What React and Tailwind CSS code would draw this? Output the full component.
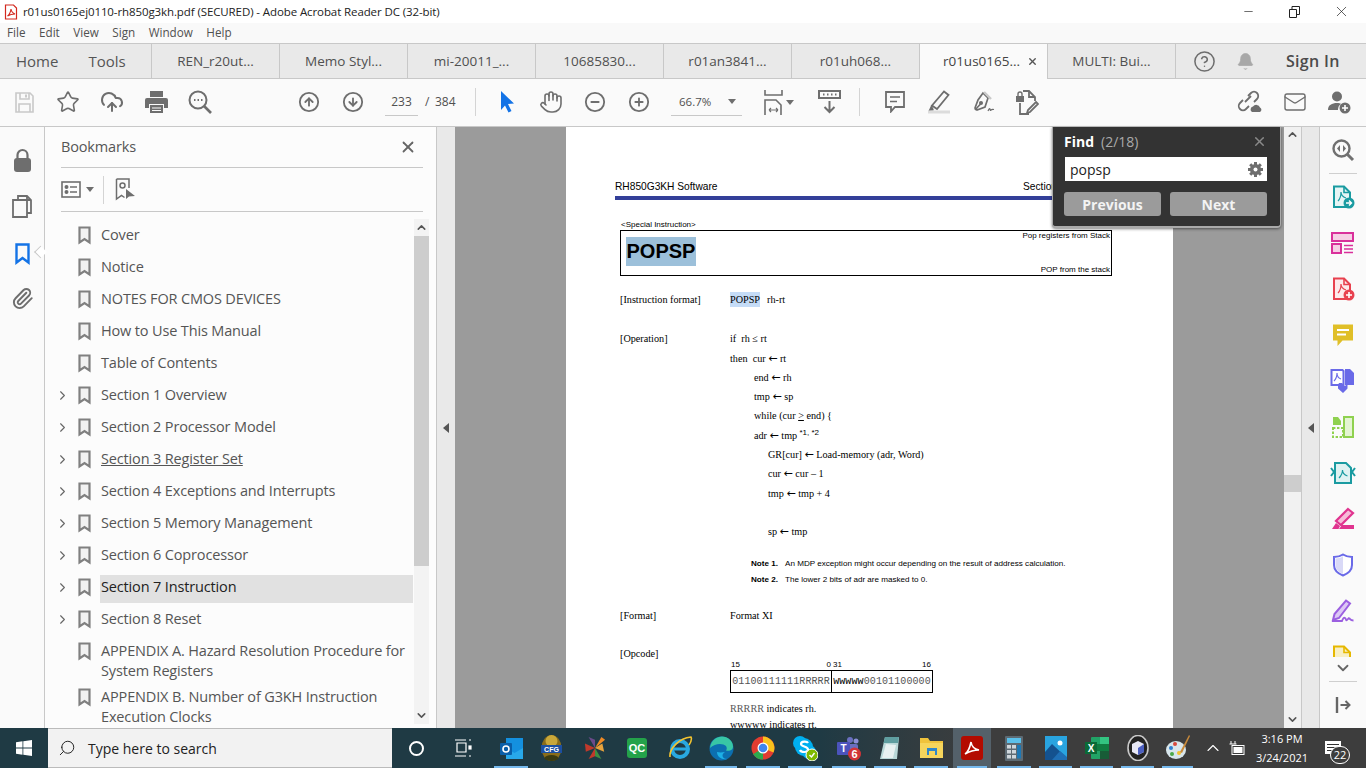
import React from 'react';
import {
  Star, CloudUpload, CircleArrowUp, CircleArrowDown, Hand, CircleMinus, CirclePlus,
  X, ChevronUp, ChevronDown, ChevronRight, Paperclip, Mail, CircleHelp, Bell, Minus, Search,
} from 'lucide-react';

const tabs = ['REN_r20ut...', 'Memo Styl...', 'mi-20011_...', '10685830...', 'r01an3841...', 'r01uh068...', 'r01us0165...', 'MULTI: Bui...'];

const bookmarks = [
  { t: 'Cover' },
  { t: 'Notice' },
  { t: 'NOTES FOR CMOS DEVICES' },
  { t: 'How to Use This Manual' },
  { t: 'Table of Contents' },
  { t: 'Section 1 Overview', kids: true },
  { t: 'Section 2 Processor Model', kids: true },
  { t: 'Section 3 Register Set', kids: true, hover: true },
  { t: 'Section 4 Exceptions and Interrupts', kids: true },
  { t: 'Section 5 Memory Management', kids: true },
  { t: 'Section 6 Coprocessor', kids: true },
  { t: 'Section 7 Instruction', kids: true, active: true },
  { t: 'Section 8 Reset', kids: true },
];

function TbBtn({ children, className = 'w-11' }) {
  return <div className={`flex h-full shrink-0 items-center justify-center text-[#6e6e6e] ${className}`}>{children}</div>;
}

function Caret({ className = '' }) {
  return <span className={`h-0 w-0 border-x-[4px] border-t-[5px] border-x-transparent border-t-[#6e6e6e] ${className}`} />;
}

function BookmarkGlyph({ className = '' }) {
  return (
    <svg width="13" height="19" viewBox="0 0 13 19" fill="#f2f2f2" stroke="#808080" strokeWidth="2.200" className={`shrink-0 ${className}`}>
      <path d="M1.500 1.500h10v15l-5-3.500-5 3.500z" />
    </svg>
  );
}

function BookmarkRow({ item }) {
  return (
    <div className="flex h-8 items-center">
      <div className="flex w-[33px] shrink-0 justify-center pl-[2px] text-[#666]">
        {item.kids && <ChevronRight size={15} strokeWidth={1.800} />}
      </div>
      <BookmarkGlyph />
      <div className={`ml-[9px] mr-[1px] flex h-7 flex-1 items-center self-end pb-[4px] pl-[1px] ${item.active ? 'bg-[#e1e1e1] text-[#222]' : ''} ${item.hover ? 'underline' : ''}`}>
        {item.t}
      </div>
    </div>
  );
}

function RailIcon({ children }) {
  return <div className="flex h-[46px] shrink-0 items-center justify-center">{children}</div>;
}

function DocShape({ color, fill = 'none', children }) {
  return (
    <svg width="24" height="24" viewBox="0 0 24 24" fill="none">
      <path d="M3 1.500h10l6 6V22H3z" stroke={color} strokeWidth="2" fill={fill} />
      <path d="M13 1.500v6h6" stroke={color} strokeWidth="1.600" />
      {children}
    </svg>
  );
}

function RightRail() {
  return (
    <div className="flex w-[46px] shrink-0 flex-col items-center bg-[#fafafa]">
      <div className="flex h-[46px] w-full shrink-0 items-center justify-center text-[#6e6e6e]">
        <svg width="24" height="24" viewBox="0 0 24 24" fill="none" stroke="#707070" strokeWidth="2.400">
          <circle cx="10.500" cy="10.500" r="8" />
          <path d="M16.500 16.500L22 22" strokeWidth="3" />
          <path d="M9 7l-3 3.500L9 14zM12 7l3 3.500L12 14z" fill="#707070" stroke="none" />
        </svg>
      </div>
      <div className="h-px w-7 shrink-0 bg-[#cfcfcf]" />
      <div className="flex h-[483px] w-full flex-col overflow-hidden">
        <RailIcon>
          <DocShape color="#1a9ba1" fill="#e6f5f5">
            <circle cx="18" cy="18" r="5.500" fill="#1a9ba1" />
            <path d="M15 18h5M18 15.500l2.500 2.500-2.500 2.500" stroke="#fff" strokeWidth="1.400" />
            <path d="M7 16c2-2 3-6 3-9 0 3 2 5 5 6" stroke="#1a9ba1" strokeWidth="1.200" />
          </DocShape>
        </RailIcon>
        <RailIcon>
          <svg width="24" height="24" viewBox="0 0 24 24" fill="none" stroke="#d9309b" strokeWidth="2">
            <rect x="1" y="2" width="21" height="8" fill="#f6cfe5" />
            <rect x="1" y="13" width="9" height="9" fill="#f6cfe5" />
            <path d="M13 14.500h9M13 18h9M13 21.500h9" strokeWidth="1.300" />
          </svg>
        </RailIcon>
        <RailIcon>
          <DocShape color="#e8414f" fill="#fdeaec">
            <circle cx="18" cy="18" r="5.500" fill="#e8414f" />
            <path d="M15 18h6M18 15v6" stroke="#fff" strokeWidth="1.600" />
            <path d="M7 16c2-2 3-6 3-9 0 3 2 5 5 6" stroke="#e8414f" strokeWidth="1.200" />
          </DocShape>
        </RailIcon>
        <RailIcon>
          <svg width="24" height="24" viewBox="0 0 24 24">
            <path d="M2 1.500h20v16H11.500L6.500 23v-5.500H2z" fill="#e0bf28" />
            <path d="M6 7h12M6 11.500h9" stroke="#fff" strokeWidth="1.800" />
          </svg>
        </RailIcon>
        <RailIcon>
          <svg width="26" height="26" viewBox="0 0 26 26">
            <path d="M1.500 2h11l1 1v14h-12z" fill="#fff" stroke="#6a6ae8" strokeWidth="2" />
            <path d="M15 1h5l4 4v12h-9z" fill="#6a6ae8" />
            <path d="M9 15l3.500 0V18h3v-1h2v3.500l-4.500 4.500L8 20.500V17z" fill="#6a6ae8" />
            <path d="M4 13c2-2 3-5 3-8 0 3 1 5 4 6" stroke="#6a6ae8" strokeWidth="1.100" fill="none" />
          </svg>
        </RailIcon>
        <RailIcon>
          <svg width="24" height="24" viewBox="0 0 24 24" fill="none" stroke="#8fd14f" strokeWidth="2">
            <path d="M13 2h9v20H13z" fill="#e4f5d2" />
            <path d="M2 13h10v9H2z" strokeDasharray="2.400 1.600" />
            <path d="M2 2h5l3 4v4H2z" fill="#8fd14f" stroke="none" />
          </svg>
        </RailIcon>
        <RailIcon>
          <svg width="26" height="24" viewBox="0 0 26 24" fill="none" stroke="#1a9ba1" strokeWidth="2">
            <path d="M5 2h11l5 5v15H5z" fill="#dff2f2" />
            <path d="M1 7l3 4-3 4M25 7l-3 4 3 4" />
            <path d="M9 17c2-2 3.500-5 3.500-8 0 3 2 5 5 6" strokeWidth="1.200" />
          </svg>
        </RailIcon>
        <RailIcon>
          <svg width="24" height="24" viewBox="0 0 24 24" fill="none">
            <path d="M17 2l5 4L10 18l-5-4z" fill="#f6bcd9" stroke="#e0348f" strokeWidth="2.200" />
            <path d="M1 22l4-6 4 3-1.500 3z" fill="#e0348f" />
            <path d="M11 18h12v4H8z" fill="#e0348f" />
          </svg>
        </RailIcon>
        <RailIcon>
          <svg width="24" height="24" viewBox="0 0 24 24">
            <path d="M12 1.500c3 2 6 2.500 9 2.500v8c0 5-4 8.500-9 10.500-5-2-9-5.500-9-10.500V4c3 0 6-.5 9-2.500z" fill="#fff" stroke="#6a6ae8" strokeWidth="2" />
            <path d="M12 3v18c-4-2-7.500-4.500-7.500-9V5.500c3 0 5.500-.7 7.500-2.500z" fill="#d9d9f7" />
          </svg>
        </RailIcon>
        <RailIcon>
          <svg width="26" height="24" viewBox="0 0 26 24" fill="none" stroke="#9b5fe0">
            <path d="M16 1.500l4 3L9 19l-6 2 1.500-6z" fill="#dcc8f5" strokeWidth="2" />
            <path d="M2 22h10c1-2 1.500-4 3-3s.5 3 2 2 1.500-2.500 2.500-1.500 1 2 4 2" strokeWidth="1.800" />
          </svg>
        </RailIcon>
        <RailIcon>
          <DocShape color="#e6b800" fill="#f8efc4" />
        </RailIcon>
      </div>
      <ChevronDown size={18} strokeWidth={2.400} className="mt-[2px] shrink-0 text-[#666]" />
      <div className="mt-[4px] h-px w-7 shrink-0 bg-[#cfcfcf]" />
      <svg width="16" height="18" viewBox="0 0 16 18" fill="none" stroke="#666" className="mt-[14px] shrink-0">
        <path d="M2 1v16" strokeWidth="2.400" />
        <path d="M5.500 9h9M10.500 5l4 4-4 4" strokeWidth="2" />
      </svg>
    </div>
  );
}

function Line({ children, className = '' }) {
  return <div className={`h-[19.3px] whitespace-pre font-['Liberation_Serif',serif] text-[10.2px] leading-[19.3px] text-black ${className}`}>{children}</div>;
}

function Arr() {
  return <span className="font-['DejaVu_Sans',sans-serif] text-[11px] leading-none">←</span>;
}

function PdfPage() {
  return (
    <div className="relative h-full w-[607px] shrink-0 overflow-hidden bg-white pl-[54px]">
      <div className="ml-[-5px] mt-[54px] flex h-3 items-center whitespace-nowrap font-['Liberation_Sans',sans-serif] text-[10.2px] text-black">
        <span className="w-[408px]">RH850G3KH Software</span>
        <span>Section 7 Instruction</span>
      </div>
      <div className="ml-[-5px] mt-[3px] h-1 w-[558px] bg-[#333f99]" />
      <div className="mt-[18px] flex h-[12px] items-center pl-[1px] pt-[2px] font-['Liberation_Sans',sans-serif] text-[8px] text-black">&lt;Special Instruction&gt;</div>
      <div className="flex h-[46px] w-[492px] items-start justify-between border border-black pl-[5px] font-['Liberation_Sans',sans-serif]">
        <span className="mt-[6px] flex h-[29px] w-[70px] items-center justify-center bg-[#9cc0da] pb-[2px] text-[20px] font-bold text-black">POPSP</span>
        <div className="flex h-full flex-col justify-between pr-[1px] text-right text-[8px] leading-[10px] text-black">
          <span>Pop registers from Stack</span>
          <span>POP from the stack</span>
        </div>
      </div>
      <div className="mt-[14px] flex">
        <Line className="w-[110px]">[Instruction format]</Line>
        <Line><span className="inline-block h-[15px] bg-[#c5dcf7] leading-[15px]">POPSP</span><span className="ml-[7px]">rh-rt</span></Line>
      </div>
      <div className="mt-[20px] flex">
        <Line className="w-[110px]">[Operation]</Line>
        <div>
          <Line>if  rh ≤ rt</Line>
          <Line>then  cur <Arr /> rt</Line>
          <Line className="pl-[24px]">end <Arr /> rh</Line>
          <Line className="pl-[24px]">tmp <Arr /> sp</Line>
          <Line className="pl-[24px]">while (cur <span className="underline">&gt;</span> end) {'{'}</Line>
          <Line className="pl-[24px]">adr <Arr /> tmp<span className="relative top-[-4px] font-['Liberation_Sans',sans-serif] text-[8px]"> *1, *2</span></Line>
          <Line className="pl-[38px]">GR[cur] <Arr /> Load-memory (adr, Word)</Line>
          <Line className="pl-[38px]">cur <Arr /> cur – 1</Line>
          <Line className="pl-[38px]">tmp <Arr /> tmp + 4</Line>
          <Line />
          <Line className="pl-[38px]">sp <Arr /> tmp</Line>
        </div>
      </div>
      <div className="ml-[131px] mt-[14px] font-['Liberation_Sans',sans-serif] text-[8.1px] leading-[16px] text-black">
        <div className="flex"><b className="w-[34px]">Note 1.</b>An MDP exception might occur depending on the result of address calculation.</div>
        <div className="flex"><b className="w-[34px]">Note 2.</b>The lower 2 bits of adr are masked to 0.</div>
      </div>
      <div className="mt-[18px] flex">
        <Line className="w-[110px]">[Format]</Line>
        <Line>Format XI</Line>
      </div>
      <div className="mt-[19px]"><Line>[Opcode]</Line></div>
      <div className="ml-[110px] w-[203px] font-['Liberation_Sans',sans-serif] text-[8px] leading-[8px] text-black">
        <div className="mt-[-2px] flex">
          <div className="flex w-[102px] justify-between pl-[1px] pr-[1px]"><span>15</span><span>0</span></div>
          <div className="flex w-[101px] justify-between pl-[1px] pr-[2px]"><span>31</span><span>16</span></div>
        </div>
        <div className="mt-[1px] flex h-[23px] border border-black font-['Liberation_Mono',monospace] text-[10px] tracking-[0.1px] text-[#555]">
          <div className="flex w-[101px] items-center justify-center border-r border-black">01100111111RRRRR</div>
          <div className="flex flex-1 items-center justify-center"><span className="text-black">wwwww</span>00101100000</div>
        </div>
      </div>
      <div className="ml-[110px] mt-[8px] font-['Liberation_Serif',serif] text-[10.2px] leading-[16px] text-black">
        <div><span className="text-[#555]">RRRRR</span> indicates rh.</div>
        <div>wwwww indicates rt.</div>
      </div>
    </div>
  );
}

function FindPanel() {
  return (
    <div className="absolute left-[1052px] top-[127px] z-10 h-[101px] w-[229px] rounded-b-[4px] border-b-2 border-l border-r border-[#aaa] bg-[#333] pl-[11px] pr-[13px] font-['Open_Sans',sans-serif] shadow-[0_1px_3px_rgba(0,0,0,0.5)]">
      <div className="flex h-[29px] items-center">
        <span className="text-[14px] font-bold text-white">Find</span>
        <span className="ml-[7px] text-[14px] text-[#aaa]">(2/18)</span>
        <X size={15} strokeWidth={2.400} className="ml-auto text-[#8a8a8a]" />
      </div>
      <div className="ml-[1px] mt-[1px] flex h-6 w-[202px] items-center justify-between bg-white pl-[5px] pr-[4px] text-[14px] text-[#222]">
        popsp
        <svg width="15" height="15" viewBox="0 0 15 15" fill="#6e6e6e">
          <g>
            <rect x="6" y="0" width="3" height="15" />
            <rect x="0" y="6" width="15" height="3" />
            <rect x="6" y="0" width="3" height="15" transform="rotate(45 7.500 7.500)" />
            <rect x="6" y="0" width="3" height="15" transform="rotate(-45 7.500 7.500)" />
          </g>
          <circle cx="7.500" cy="7.500" r="5.500" />
          <circle cx="7.500" cy="7.500" r="2" fill="#fff" />
        </svg>
      </div>
      <div className="mt-[11px] flex justify-between">
        <div className="flex h-6 w-[97px] items-center justify-center rounded-[3px] bg-[#9b9b9b] text-[14px] font-bold text-[#f3f3f3]">Previous</div>
        <div className="flex h-6 w-[97px] items-center justify-center rounded-[3px] bg-[#9b9b9b] text-[14px] font-bold text-[#f3f3f3]">Next</div>
      </div>
    </div>
  );
}

function TaskIcon({ children, active, run = true, className = 'w-[42px]' }) {
  return (
    <div className={`relative flex h-full shrink-0 items-center justify-center ${active ? 'bg-[#54616a]' : ''} ${className}`}>
      {children}
      {run && <span className="absolute bottom-0 left-[4px] right-[4px] h-[2px] bg-[#76b9ed]" />}
    </div>
  );
}

function Taskbar() {
  return (
    <div className="flex h-10 w-full shrink-0 items-center bg-gradient-to-r from-[#1f3a44] via-[#1f3a44] via-[60%] to-[#3d3d3d] to-[72%] font-['Open_Sans',sans-serif] text-white">
      <div className="flex h-full w-12 shrink-0 items-center justify-center">
        <svg width="16" height="16" viewBox="0 0 16 16" fill="#fff">
          <path d="M0 2.200l6.500-.9v6.300H0zM7.300 1.200L16 0v7.600H7.300zM0 8.400h6.500v6.300L0 13.800zM7.300 8.400H16V16l-8.700-1.200z" />
        </svg>
      </div>
      <div className="flex h-full w-[344px] shrink-0 items-center border-y border-[#bbb] bg-[#f2f2f2] pl-[10px] text-[14px] text-[#222]">
        <Search size={18} strokeWidth={1.300} className="-scale-x-100 text-[#222]" />
        <span className="ml-[12px]">Type here to search</span>
      </div>
      <div className="flex h-full items-center">
        <TaskIcon run={false} className="w-[48px]">
          <span className="h-[15px] w-[15px] rounded-full border-2 border-white" />
        </TaskIcon>
        <TaskIcon run={false} className="w-[46px]">
          <svg width="18" height="18" viewBox="0 0 18 18" fill="none" stroke="#fff" strokeWidth="1.200">
            <path d="M1 1h11M1 17h11M3 4h9v9H3z" /><rect x="15" y="7" width="2" height="3" fill="#fff" /><path d="M15 1h2M15 17h2" />
          </svg>
        </TaskIcon>
        <TaskIcon className="ml-[4px] w-[42px]">
          <svg width="25" height="25" viewBox="0 0 25 25">
            <rect x="7" y="2" width="17" height="20" fill="#1490df" /><path d="M7 12l8.500 5L24 12v11H7z" fill="#28a8ea" />
            <rect x="1" y="7" width="12" height="12" rx="1" fill="#0a5ea8" /><circle cx="7" cy="13" r="3" fill="none" stroke="#fff" strokeWidth="1.600" />
          </svg>
        </TaskIcon>
        <TaskIcon run={false} className="w-[38px]">
          <svg width="23" height="29" viewBox="0 0 23 29">
            <ellipse cx="11.500" cy="14" rx="10" ry="13" fill="#8a6d1a" /><circle cx="11.500" cy="7" r="6" fill="#c9a73a" />
            <rect x="1" y="11" width="21" height="8" fill="#1c4fa0" />
            <text x="11.500" y="17.500" textAnchor="middle" fontSize="7" fontWeight="700" fill="#fff" fontFamily="Liberation Sans">CFG</text>
            <ellipse cx="11.500" cy="24" rx="7" ry="3" fill="#3a3a10" />
          </svg>
        </TaskIcon>
        <TaskIcon run={false} className="ml-[1px] w-[48px]">
          <svg width="22" height="24" viewBox="0 0 24 26">
            <path d="M12 13L5 1l7 3z" fill="#6b4a8a" /><path d="M12 13l7-12 4 3z" fill="#f08a24" /><path d="M12 13L1 8l1 9z" fill="#c0392b" />
            <path d="M12 13l10 4-2-9z" fill="#e8a33d" /><path d="M12 13l-7 12 7-3z" fill="#c0392b" /><path d="M12 13l7 12-7-3z" fill="#3e8e41" />
          </svg>
        </TaskIcon>
        <TaskIcon run={false} className="w-[36px]">
          <span className="flex h-[20px] w-[20px] items-center justify-center rounded-[3px] bg-[#24a24a] font-['Liberation_Sans',sans-serif] text-[11px] font-bold text-white">QC</span>
        </TaskIcon>
        <TaskIcon run={false} className="ml-[4px] w-[42px]">
          <svg width="26" height="26" viewBox="0 0 26 26" fill="none">
            <circle cx="13" cy="14" r="8" stroke="#29a8e0" strokeWidth="4" /><path d="M6 14h15" stroke="#29a8e0" strokeWidth="3" />
            <path d="M3 22C2 14 12 3 24 2c1 2 0 5-2 8" stroke="#f4c430" strokeWidth="1.600" />
          </svg>
        </TaskIcon>
        <TaskIcon className="w-[40px]">
          <svg width="25" height="25" viewBox="0 0 25 25">
            <circle cx="12.500" cy="12.500" r="12" fill="#0c6fb0" /><path d="M1 12C2 4 8 .5 13 .5c6 0 11 4.500 11 10 0 4-4 5-7 4 1-1 1-3 0-4.500C14 7 6 7 1 12z" fill="#38c6a5" />
            <path d="M8 16c0 5 5 8 10 7-5 0-6-5-2-7-3 .5-6 .5-8 0z" fill="#1db0e6" />
          </svg>
        </TaskIcon>
        <TaskIcon className="ml-[1px] w-[42px]">
          <svg width="24" height="24" viewBox="0 0 24 24">
            <circle cx="12" cy="12" r="11.500" fill="#e23c31" /><path d="M12 12L2 18a11.500 11.500 0 0 0 10 5.500z" fill="#2da94f" />
            <path d="M12 .5a11.500 11.500 0 0 1 10.500 16L12 12z" fill="#f9c11c" /><path d="M22.500 6.500H12v6z" fill="#f9c11c" />
            <path d="M2 18L7 6.500 12 12z" fill="#e23c31" /><circle cx="12" cy="12" r="5.500" fill="#fff" /><circle cx="12" cy="12" r="4.300" fill="#3f86ee" />
          </svg>
        </TaskIcon>
        <TaskIcon className="w-[42px]">
          <svg width="26" height="26" viewBox="0 0 26 26">
            <circle cx="8" cy="8" r="7" fill="#00aff0" /><circle cx="17" cy="17" r="7" fill="#00aff0" /><rect x="3" y="3" width="18" height="18" rx="9" fill="#00aff0" />
            <path d="M16 8c-1-2-7-2-7 1s7 2 7 5.500-7 3-8 .5" fill="none" stroke="#fff" strokeWidth="2.200" />
            <circle cx="20" cy="20" r="6" fill="#7fba00" stroke="#fff" /><path d="M17.500 20l2 2 3-4" fill="none" stroke="#fff" strokeWidth="1.400" />
          </svg>
        </TaskIcon>
        <TaskIcon className="ml-[2px] w-[42px]">
          <svg width="28" height="28" viewBox="0 0 28 28">
            <circle cx="15" cy="6" r="3" fill="#6a6fc0" /><circle cx="21" cy="7" r="2.500" fill="#8b8fd8" /><rect x="10" y="10" width="13" height="10" rx="2" fill="#6a6fc0" />
            <rect x="2" y="8" width="13" height="13" rx="1" fill="#4b53bc" />
            <text x="8.500" y="18" textAnchor="middle" fontSize="10" fontWeight="700" fill="#fff" fontFamily="Liberation Sans">T</text>
            <circle cx="19.500" cy="20" r="6.500" fill="#d13438" />
            <text x="19.500" y="24" textAnchor="middle" fontSize="11" fontWeight="700" fill="#fff" fontFamily="Liberation Sans">6</text>
          </svg>
        </TaskIcon>
        <TaskIcon className="w-[40px]">
          <svg width="24" height="26" viewBox="0 0 24 26">
            <path d="M7 2h14l-2 22H2z" fill="#b9d8d8" /><path d="M7 2h14l-1 6H5.500z" fill="#5f9ea0" /><path d="M8 9l10 1-3 13H4z" fill="#e8f1f1" />
          </svg>
        </TaskIcon>
        <TaskIcon className="w-[42px]">
          <svg width="23" height="22" viewBox="0 0 23 22">
            <path d="M0 1h8l2 3h13v17H0z" fill="#f0c33c" /><path d="M0 6h23v15H0z" fill="#f6d55c" /><rect x="7" y="11" width="10" height="7" fill="#2f86c9" /><rect x="9" y="14" width="6" height="4" fill="#f6d55c" />
          </svg>
        </TaskIcon>
        <TaskIcon active className="ml-[1px] w-[38px]">
          <svg width="22" height="24" viewBox="0 0 22 24">
            <rect width="22" height="24" rx="3" fill="#b30b00" />
            <path d="M4 18c3-2 5-7 6-12 .5 4 3 7 8 8-5 0-9 1-14 4z" fill="none" stroke="#fff" strokeWidth="1.600" />
          </svg>
        </TaskIcon>
        <TaskIcon className="ml-[2px] w-[42px]">
          <svg width="18" height="25" viewBox="0 0 18 25">
            <rect width="18" height="25" rx="1" fill="#5d6a73" /><rect x="2" y="2" width="14" height="5" fill="#5bc0ea" />
            <g fill="#cfd6db"><rect x="2" y="9" width="4" height="3.500" /><rect x="7" y="9" width="4" height="3.500" /><rect x="2" y="14" width="4" height="3.500" /><rect x="7" y="14" width="4" height="3.500" /><rect x="2" y="19" width="4" height="3.500" /><rect x="7" y="19" width="4" height="3.500" /></g>
            <rect x="12" y="9" width="4" height="13.500" fill="#1e78b4" />
          </svg>
        </TaskIcon>
        <TaskIcon className="w-[41px]">
          <svg width="22" height="24" viewBox="0 0 22 24">
            <rect width="22" height="24" fill="#29a4e0" /><circle cx="15" cy="7" r="2.500" fill="#fff" /><path d="M0 16l7-8 15 14v2H0z" fill="#14528f" /><path d="M7 24l8-9 7 6v3z" fill="#1f6fb5" />
          </svg>
        </TaskIcon>
        <TaskIcon className="w-[41px]">
          <svg width="24" height="24" viewBox="0 0 24 24">
            <rect x="6" y="1" width="18" height="22" rx="1" fill="#21a366" /><rect x="15" y="1" width="9" height="7" fill="#33c481" /><rect x="6" y="8" width="18" height="7" fill="#107c41" /><rect x="15" y="15" width="9" height="8" fill="#185c37" />
            <rect y="6" width="12" height="12" fill="#0b6a37" /><text x="6" y="15.500" textAnchor="middle" fontSize="10" fontWeight="700" fill="#fff" fontFamily="Liberation Sans">X</text>
          </svg>
        </TaskIcon>
        <TaskIcon className="w-[41px]">
          <svg width="24" height="26" viewBox="0 0 24 26">
            <ellipse cx="12" cy="13" rx="10" ry="12.500" fill="#222" stroke="#c9c9c9" strokeWidth="1.600" /><path d="M12 6l6 3v8l-6 3-6-3V9z" fill="#e8e8f5" /><path d="M12 13l6-4v8l-6 3z" fill="#4c5fc0" />
          </svg>
        </TaskIcon>
        <TaskIcon className="w-[39px]">
          <svg width="26" height="28" viewBox="0 0 26 28">
            <ellipse cx="11" cy="16" rx="10" ry="9" fill="#d8e6ec" /><circle cx="6" cy="14" r="2" fill="#2f7fd0" /><circle cx="10" cy="10" r="2" fill="#d94a3d" /><circle cx="14" cy="19" r="2" fill="#f2c230" /><circle cx="7" cy="20" r="2" fill="#4aa84a" />
            <path d="M24 1l1 1-8 17-2-1z" fill="#c98a3a" />
          </svg>
        </TaskIcon>
      </div>
      <ChevronUp size={20} strokeWidth={1.300} className="ml-[6px] shrink-0 text-white" />
      <svg width="16" height="16" viewBox="0 0 16 16" fill="none" stroke="#fff" className="ml-[6px] shrink-0">
        <rect x="3" y="5.500" width="12" height="9" /><rect x="5" y="7.500" width="8" height="5" fill="#fff" /><path d="M2 1v3M6 1v3M0.500 4h7" />
      </svg>
      <div className="ml-[7px] flex w-[60px] shrink-0 flex-col items-center text-[11px] leading-[19px]">
        <span>3:16 PM</span>
        <span>3/24/2021</span>
      </div>
      <div className="relative ml-[13px] h-full w-8 shrink-0">
        <div className="absolute left-0 top-[13px] flex h-[13px] w-[16px] flex-col justify-center gap-[2px] bg-white px-[2px]">
          <span className="h-px bg-[#333]" /><span className="h-px bg-[#333]" /><span className="h-px bg-[#333]" />
        </div>
        <span className="absolute left-[5px] top-[18px] flex h-[18px] w-[20px] items-center justify-center rounded-full border border-white bg-[#3d3d3d] text-[11px]">22</span>
      </div>
    </div>
  );
}

export default function App() {
  return (
    <div className="relative flex h-[768px] w-[1366px] flex-col overflow-hidden bg-white font-['Open_Sans',sans-serif] text-[#505050]">
      {/* title bar */}
      <div className="flex h-[23px] shrink-0 items-center bg-white pl-[4px] text-[11.5px] tracking-[-0.1px] text-[#222]">
        <svg width="14" height="16" viewBox="0 0 14 16" fill="none" stroke="#d2281e" className="shrink-0">
          <path d="M1.500 1h8l3 3v11h-11z" fill="#fff" strokeWidth="1.200" />
          <path d="M3.500 12c1.500-1 3-3.500 3.500-7 .3 2.500 1.500 4 4 5-2.500 0-5 .5-7.500 2z" strokeWidth="1.100" />
        </svg>
        <span className="ml-[5px]">r01us0165ej0110-rh850g3kh.pdf (SECURED) - Adobe Acrobat Reader DC (32-bit)</span>
        <div className="ml-auto flex h-full items-center text-[#222]">
          <Minus size={13} strokeWidth={1.200} className="mr-[34px]" />
          <svg width="11" height="12" viewBox="0 0 11 12" fill="none" stroke="#222" className="mr-[33px]"><path d="M.5 3.500h7v8h-7zM3 3.500V.5h7.500v8H7.500" /></svg>
          <X size={17} strokeWidth={1} className="mr-[16px]" />
        </div>
      </div>
      {/* menu bar */}
      <div className="flex h-5 shrink-0 items-center gap-[13.5px] bg-[#f9f9f9] pl-[7px] text-[11.7px] text-[#505050]">
        <span>File</span><span>Edit</span><span>View</span><span>Sign</span><span>Window</span><span>Help</span>
      </div>
      {/* tabs */}
      <div className="flex h-9 shrink-0 items-stretch border-y border-[#c8c8c8] bg-[#e9e9e9]">
        <div className="flex w-[151px] shrink-0 items-center gap-[30px] pl-4 text-[15px] text-[#555]">
          <span>Home</span><span>Tools</span>
        </div>
        {tabs.map((t, i) => (
          <div
            key={t}
            className={`relative flex w-[128px] shrink-0 items-center justify-center border-l border-[#c8c8c8] text-[13.5px] ${i === 6 ? 'mb-[-1px] bg-[#fafafa] text-[#444]' : 'text-[#505050]'}`}
          >
            <span className={i === 6 ? 'mr-[4px]' : ''}>{t}</span>
            {i === 6 && <X size={11} strokeWidth={3} className="absolute right-[9px] text-[#555]" />}
          </div>
        ))}
        <div className="flex flex-1 items-center border-l border-[#c8c8c8]">
          <CircleHelp size={23} strokeWidth={1.600} className="ml-[17px] text-[#6e6e6e]" />
          <Bell size={19} fill="#a8a8a8" strokeWidth={1} className="ml-[20px] text-[#a8a8a8]" />
          <span className="ml-[31px] text-[16px] font-semibold tracking-[0.3px] text-[#4b4b4b]">Sign In</span>
        </div>
      </div>
      {/* toolbar */}
      <div className="flex h-[48px] shrink-0 items-center border-b border-[#c8c8c8] bg-[#fafafa] pb-[1px] pl-[2px]">
        <TbBtn>
          <svg width="19" height="21" viewBox="0 0 19 21" fill="none" stroke="#c9c9c9" strokeWidth="1.600">
            <path d="M1 1h14l3 3v16H1z" /><path d="M5 1v6h9V1M4 20v-8h11v8" /><rect x="10" y="2.500" width="2" height="3" fill="#c9c9c9" stroke="none" />
          </svg>
        </TbBtn>
        <TbBtn><Star size={24} strokeWidth={1.600} /></TbBtn>
        <TbBtn><CloudUpload size={24} strokeWidth={2} /></TbBtn>
        <TbBtn>
          <svg width="23" height="22" viewBox="0 0 23 22" fill="#6e6e6e">
            <path d="M5 0h13v6H5z" /><path d="M2 7h19a2 2 0 0 1 2 2v8h-4v-4H4v4H0V9a2 2 0 0 1 2-2z" /><path d="M5 14h13v8H5zM7 16.500v1h9v-1zM7 19v1h9v-1z" fillRule="evenodd" />
          </svg>
        </TbBtn>
        <TbBtn>
          <svg width="24" height="24" viewBox="0 0 24 24" fill="none" stroke="#6e6e6e" strokeWidth="2">
            <circle cx="10" cy="10" r="8.500" /><path d="M16 16l7 7" strokeWidth="2.600" /><path d="M6 10h1.500M9.500 10H11M13 10h1.500" />
          </svg>
        </TbBtn>
        <span className="w-[65px] shrink-0" />
        <TbBtn><CircleArrowUp size={22} strokeWidth={2} /></TbBtn>
        <TbBtn><CircleArrowDown size={22} strokeWidth={2} /></TbBtn>
        <div className="ml-[10px] flex h-[27px] w-[33px] shrink-0 items-center justify-center border-b border-[#c8c8c8] text-[12px]">233</div>
        <span className="ml-[7px] w-[10px] shrink-0 text-[12px]">/</span>
        <span className="w-[30px] shrink-0 text-[12px]">384</span>
        <span className="ml-[10px] h-7 w-px shrink-0 bg-[#d4d4d4]" />
        <TbBtn className="ml-[9px] w-11">
          <svg width="15" height="24" viewBox="0 0 15 24"><path d="M1 1l13 12.500-6 .5 3.500 7-3 1.500L5 15.500 1 20z" fill="#1473e6" /></svg>
        </TbBtn>
        <TbBtn><Hand size={24} strokeWidth={1.600} /></TbBtn>
        <TbBtn><CircleMinus size={22} strokeWidth={2} /></TbBtn>
        <TbBtn><CirclePlus size={22} strokeWidth={2} /></TbBtn>
        <div className="ml-[10px] flex h-[27px] w-[71px] shrink-0 items-center border-b border-[#c8c8c8] pl-[8px] text-[11.5px]">
          66.7%<Caret className="ml-[17px]" />
        </div>
        <TbBtn className="ml-[15px] w-[44px]">
          <svg width="20" height="25" viewBox="0 0 20 25" fill="none" stroke="#6e6e6e" strokeWidth="1.600">
            <path d="M1 0v5h17V0M1 25V10h11l5 5v10" /><path d="M5 20h9M5 20l2-2M5 20l2 2M14 20l-2-2M14 20l-2 2" strokeWidth="1.100" />
          </svg>
          <Caret className="ml-[2px]" />
        </TbBtn>
        <TbBtn className="ml-[4px] w-[48px]">
          <svg width="23" height="24" viewBox="0 0 23 24" fill="none" stroke="#6e6e6e" strokeWidth="2">
            <path d="M1 1h21v7H1z" /><path d="M5 4.500h1.500M9 4.500h1.500M13 4.500h1.500M17 4.500h1.500" /><path d="M11.500 11v11M6.500 17l5 5 5-5" />
          </svg>
        </TbBtn>
        <span className="ml-[6px] h-7 w-px shrink-0 bg-[#d4d4d4]" />
        <TbBtn className="ml-[13px] w-11">
          <svg width="20" height="22" viewBox="0 0 20 22" fill="none" stroke="#6e6e6e" strokeWidth="1.800">
            <path d="M1 1h18v15h-9l-4 4.500V16H1z" /><path d="M5 6h10M5 10.500h7" strokeWidth="1.500" />
          </svg>
        </TbBtn>
        <TbBtn>
          <svg width="24" height="24" viewBox="0 0 24 24" fill="none" stroke="#6e6e6e" strokeWidth="1.800">
            <path d="M17 1.500l4.500 3.500L10 19l-5-3.500z" /><path d="M5 15.500L3 20l3.500-.5" fill="#6e6e6e" />
            <rect x="1" y="20.500" width="22" height="3" fill="#dcdcdc" stroke="none" />
          </svg>
        </TbBtn>
        <TbBtn>
          <svg width="24" height="22" viewBox="0 0 24 22" fill="none" stroke="#6e6e6e" strokeWidth="1.700">
            <path d="M12 2l5 5-3 9-8 3-2-2 3-8z" /><path d="M4 19l5.500-6" /><circle cx="10" cy="12" r="1.200" fill="#6e6e6e" />
            <path d="M13 1l7 7" strokeWidth="2.400" stroke="#c9c9c9" /><path d="M17 20c1-2 1.500-3 2-2s0 2 1 1 1-1 3-.5" strokeWidth="1.200" />
          </svg>
        </TbBtn>
        <TbBtn>
          <svg width="24" height="25" viewBox="0 0 24 25" fill="none" stroke="#6e6e6e" strokeWidth="1.800">
            <path d="M8 1h6l6 6v4M5 13v11h9" /><path d="M14 1v6h6" />
            <rect x="1" y="6" width="8" height="6" fill="#6e6e6e" stroke="none" /><path d="M3 6V4a2 2 0 0 1 4 0v2" strokeWidth="1.400" />
            <path d="M21 12l2 2-8 8-3 1 1-3z" />
          </svg>
        </TbBtn>
        <span className="w-[179px] shrink-0" />
        <TbBtn className="w-[44px]">
          <svg width="26" height="24" viewBox="0 0 26 24" fill="none" stroke="#6e6e6e" strokeWidth="1.800">
            <path d="M8 12l6-6M6 10l-3 3a4 4 0 0 0 6 6l3-3M11 6l3-3a4 4 0 0 1 6 6l-3 3" />
            <path d="M15 22a3 3 0 0 1 1-5.500 4 4 0 0 1 7 1 2.500 2.500 0 0 1 0 4.500z" fill="#6e6e6e" stroke="none" />
          </svg>
        </TbBtn>
        <TbBtn className="w-[45px]"><Mail size={24} strokeWidth={1.400} /></TbBtn>
        <TbBtn className="w-[43px]">
          <svg width="24" height="24" viewBox="0 0 24 24">
            <circle cx="10" cy="6.500" r="5" fill="#6e6e6e" /><path d="M1 20c0-5 4-7 9-7 2 0 3 .3 4 1-2 1-3 3-3 6z" fill="#6e6e6e" />
            <circle cx="18" cy="18" r="5.500" fill="#6e6e6e" /><path d="M15 18h6M18 15v6" stroke="#fff" strokeWidth="1.600" />
          </svg>
        </TbBtn>
      </div>
      {/* main */}
      <div className="flex min-h-0 flex-1">
        {/* left rail */}
        <div className="relative flex w-[45px] shrink-0 flex-col items-center border-r border-[#c8c8c8] bg-[#fafafa] pt-[9px] text-[#6e6e6e]">
          <div className="flex h-[47px] items-center">
            <svg width="17" height="24" viewBox="0 0 17 24" fill="none">
              <path d="M3.500 11V7a5 5 0 0 1 10 0v4" stroke="#6e6e6e" strokeWidth="2.200" />
              <rect y="10" width="17" height="14" rx="3" fill="#6e6e6e" />
            </svg>
          </div>
          <div className="flex h-[47px] items-center">
            <svg width="20" height="23" viewBox="0 0 20 23" fill="none" stroke="#6e6e6e" strokeWidth="1.800">
              <path d="M6 4V1h9l4 4v13h-4" /><path d="M15 1v4h4" /><path d="M1 5h14v17H1z" />
            </svg>
          </div>
          <div className="flex h-[47px] items-center">
            <svg width="15" height="22" viewBox="0 0 15 22" fill="none" stroke="#1473e6" strokeWidth="2.400"><path d="M1.500 1.500h12v18l-6-4.500-6 4.500z" /></svg>
          </div>
          <div className="flex h-[43px] items-center"><Paperclip size={23} strokeWidth={2} /></div>
          <span className="absolute right-[-1px] top-[125px] h-[9px] w-[9px] -translate-y-1/2 rotate-45 border-b border-l border-[#c8c8c8] bg-white" />
        </div>
        {/* bookmarks panel */}
        <div className="flex w-[391px] shrink-0 flex-col bg-[#fcfcfc] text-[14.5px] tracking-[-0.15px] text-[#555]">
          <div className="ml-4 mr-[13px] flex h-[41px] shrink-0 items-center justify-between border-b border-[#c8c8c8] pr-[6px]">
            <span>Bookmarks</span>
            <X size={18} strokeWidth={2.400} className="text-[#666]" />
          </div>
          <div className="ml-4 mr-[13px] flex h-[44px] shrink-0 items-center border-b border-[#c8c8c8]">
            <svg width="20" height="17" viewBox="0 0 20 17" fill="none" stroke="#6e6e6e" strokeWidth="1.600">
              <rect x="1" y="1" width="18" height="15" /><circle cx="5.500" cy="6" r="1.200" fill="#6e6e6e" /><circle cx="5.500" cy="11" r="1.200" fill="#6e6e6e" /><path d="M9 6h7M9 11h7" />
            </svg>
            <Caret className="ml-[5px]" />
            <span className="ml-[9px] h-7 w-px bg-[#d4d4d4]" />
            <svg width="22" height="23" viewBox="0 0 22 23" fill="none" stroke="#6e6e6e" strokeWidth="1.500" className="ml-[11px]">
              <path d="M1.500 1h12.500v9M1.500 1v20l5-3.500 3 2" /><circle cx="7.500" cy="7.500" r="2.500" /><path d="M11 11l0 10 3-2.500 6-.5z" fill="#6e6e6e" stroke="none" />
            </svg>
          </div>
          <div className="flex min-h-0 flex-1 overflow-hidden pt-[7px]">
            <div className="min-w-0 flex-1 overflow-hidden">
              {bookmarks.map((b) => <BookmarkRow key={b.t} item={b} />)}
              <div className="flex pt-[6px]">
                <div className="w-[33px] shrink-0" />
                <BookmarkGlyph className="mt-[1px]" />
                <div className="ml-[10px] leading-[20px]">APPENDIX A. Hazard Resolution Procedure for<br />System Registers</div>
              </div>
              <div className="flex pt-[6px]">
                <div className="w-[33px] shrink-0" />
                <BookmarkGlyph className="mt-[1px]" />
                <div className="ml-[10px] leading-[20px]">APPENDIX B. Number of G3KH Instruction<br />Execution Clocks</div>
              </div>
            </div>
            <div className="mr-[7px] flex h-[505px] w-[15px] shrink-0 flex-col items-center bg-[#f3f3f3] text-[#555]">
              <ChevronUp size={13} strokeWidth={2.800} className="my-[2px] shrink-0" />
              <div className="h-[330px] w-full shrink-0 bg-[#cdcdcd]" />
              <ChevronDown size={13} strokeWidth={2.800} className="mb-[2px] mt-auto shrink-0" />
            </div>
          </div>
        </div>
        {/* collapse strip */}
        <div className="flex w-[19px] shrink-0 items-center justify-center border-l border-[#c8c8c8] bg-[#e9e9e9]">
          <span className="h-0 w-0 border-y-[5px] border-r-[6px] border-y-transparent border-r-[#555]" />
        </div>
        {/* document */}
        <div className="flex w-[829px] shrink-0 justify-center bg-[#9b9b9b]">
          <PdfPage />
        </div>
        {/* doc scrollbar */}
        <div className="flex w-[17px] shrink-0 flex-col items-center bg-[#f1f1f1] text-[#555]">
          <ChevronUp size={13} strokeWidth={2.800} className="mt-[1px] shrink-0" />
          <div className="mt-[334px] h-[17px] w-full shrink-0 bg-[#cdcdcd]" />
          <ChevronDown size={13} strokeWidth={2.800} className="mb-[2px] mt-auto shrink-0" />
        </div>
        <div className="flex w-[19px] shrink-0 items-center justify-center border-x border-[#c8c8c8] bg-[#e9e9e9]">
          <span className="h-0 w-0 border-y-[5px] border-r-[6px] border-y-transparent border-r-[#555]" />
        </div>
        <RightRail />
      </div>
      <Taskbar />
      <FindPanel />
    </div>
  );
}
